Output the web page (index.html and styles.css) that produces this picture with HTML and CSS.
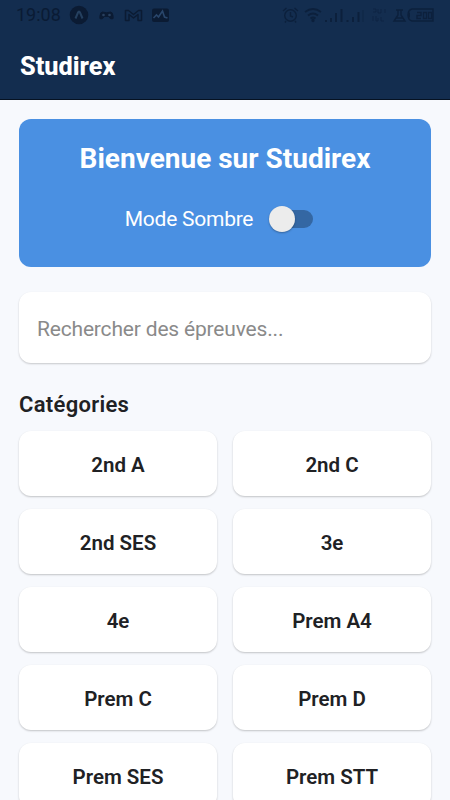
FILE: index.html
```html
<!DOCTYPE html>
<html lang="fr">
<head>
<meta charset="utf-8">
<title>Studirex</title>
<link rel="stylesheet" href="styles.css">
</head>
<body>
<header class="header">
  <div class="status">
    <span class="clock">19:08</span>
    <svg class="status-icons" width="104" height="20" viewBox="0 0 104 20">
      <circle cx="10" cy="10" r="9.300" fill="#0b1b33"/>
      <path d="M6.500 13.500 9 7.500q1-2 2 0l2.500 6" fill="none" stroke="#25405f" stroke-width="2"/>
      <path d="M33 6.500q4 1.500 8 0 2 0 2.500 3.500t-.5 3.500q-2 .5-4-2.500h-4q-2 3-4 2.500-1 0-.5-3.500t2.500-3.500z" fill="#0b1b33" stroke="#0b1b33" transform="translate(.5 .5)"/>
      <circle cx="34.500" cy="10" r="1.300" fill="#29405f"/><circle cx="40.500" cy="10" r="1.300" fill="#29405f"/>
      <path d="M56.500 15.500V5.500h3l5 4 5-4h3v10h-3.500V9.500l-4.500 3.500-4.500-3.500v6z" fill="none" stroke="#0b1b33" stroke-width="1.500" stroke-linejoin="round"/>
      <rect x="83" y="3.500" width="17" height="13.500" rx="2" fill="#0b1b33"/>
      <path d="m84.500 13 3-3 2 2 4-6 2 6 3 1" fill="none" stroke="#29466b" stroke-width="1.600"/>
    </svg>
    <svg class="status-icons status-right" width="160" height="20" viewBox="0 0 160 20" fill="none" stroke="#0c203c" stroke-width="1.400">
      <circle cx="10.500" cy="10.500" r="5.800"/><path d="M10.500 7v4l2.500 1M3 6l3.500-3M14.500 3 18 6M6 16l-1 1.500M15 16l1 1.500"/>
      <path d="M25 7q8-6 16 0M28 10.500q5-4 10 0M30.500 13.500q2.500-2 5 0" stroke-width="1.800"/><circle cx="33" cy="15.500" r="1" fill="#0c203c"/>
      <path d="M46 17v-2M51 17v-4M56 17V8M61.500 17V4M67.500 17v-2M73 17v-5M78.500 17V7" stroke-width="2"/>
      <path d="M83 5v12" opacity=".35"/>
      <path d="M93 4h3v3h-3M98 4v4h3V4M105 4v4M93 11v5M96 11v5h2v-3M101 12v4h3" stroke-width="1" opacity=".6"/>
      <path d="M116 5h7M118 5v5l-4 6h11l-4-6V5M116.500 13h6"/>
      <path d="M132 4h21v12h-21q-4-1-4-6t4-6z"/><path d="M129 7.500v5" stroke-width="2"/>
      <path d="M137 7.500h4v3h-4v3h4M143.500 7.500h3v6h-3zM148.500 7.500h3v6h-3z" stroke-width="1.300"/>
    </svg>
  </div>
  <h1 class="brand">Studirex</h1>
</header>
<main class="content">
  <section class="welcome">
    <h2 class="welcome-title">Bienvenue sur Studirex</h2>
    <div class="mode">
      <span>Mode Sombre</span>
      <span class="switch"></span>
    </div>
  </section>
  <div class="search">Rechercher des épreuves...</div>
  <h3 class="section-title">Catégories</h3>
  <div class="grid">
    <div class="card">2nd A</div><div class="card">2nd C</div>
    <div class="card">2nd SES</div><div class="card">3e</div>
    <div class="card">4e</div><div class="card">Prem A4</div>
    <div class="card">Prem C</div><div class="card">Prem D</div>
    <div class="card">Prem SES</div><div class="card">Prem STT</div>
  </div>
</main>
</body>
</html>
```
FILE: styles.css
```css
* { box-sizing: border-box; }
body {
  margin: 0;
  height: 800px;
  overflow: hidden;
  background: #f7f9fd;
  font-family: Roboto, "Liberation Sans", sans-serif;
  color: #202124;
}
h1, h2, h3 { margin: 0; }
.header {
  height: 100px;
  background: #132d4f;
  border-bottom: 1px solid #061222;
}
.status {
  display: flex;
  align-items: center;
  height: 30px;
  padding: 0 10px 0 16px;
}
.clock {
  width: 53px;
  font-size: 18px;
  line-height: 30px;
  color: #0a1b34;
}
.status-icons { flex: none; }
.status-right { margin-left: auto; }
.brand {
  padding: 21px 20px 0;
  font-size: 25.3px;
  line-height: 32px;
  font-weight: 800;
  color: #fff;
}
.content { padding: 19px 19px 0; }
.welcome {
  height: 148px;
  padding-top: 22px;
  border-radius: 12px;
  background: #4a90e2;
  color: #fff;
  text-align: center;
}
.welcome-title {
  font-size: 28px;
  line-height: 36px;
  font-weight: 700;
}
.mode {
  display: flex;
  justify-content: center;
  align-items: center;
  gap: 16px;
  height: 28px;
  margin-top: 28px;
  padding-right: 12px;
  font-size: 21px;
  letter-spacing: -.25px;
}
.switch {
  position: relative;
  width: 44px;
  height: 18px;
  border-radius: 9px;
  background: #3467a3;
}
.switch::before {
  content: "";
  position: absolute;
  top: -4px;
  left: 0;
  width: 26px;
  height: 26px;
  border-radius: 50%;
  background: #ececec;
  box-shadow: 0 1px 2px rgba(0, 0, 0, .3);
}
.search {
  height: 71px;
  margin-top: 25px;
  padding-left: 18px;
  border-radius: 12px;
  background: #fff;
  box-shadow: 0 1px 2px rgba(0, 0, 0, .2);
  font-size: 21px;
  line-height: 74px;
  letter-spacing: -.18px;
  color: #8a8a8a;
}
.section-title {
  margin-top: 28px;
  font-size: 22px;
  line-height: 28px;
  font-weight: 600;
  letter-spacing: .3px;
}
.grid {
  display: grid;
  grid-template-columns: 1fr 1fr;
  grid-auto-rows: 65px;
  gap: 13px 16px;
  margin-top: 12px;
}
.card {
  border-radius: 12px;
  background: #fff;
  box-shadow: 0 1px 2px rgba(0, 0, 0, .22);
  font-size: 20.5px;
  line-height: 68px;
  font-weight: 600;
  text-align: center;
}
```
